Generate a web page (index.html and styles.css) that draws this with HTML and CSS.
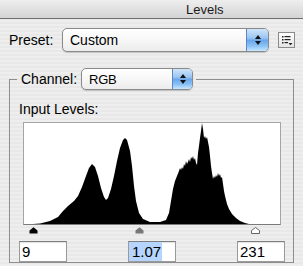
FILE: index.html
```html
<!DOCTYPE html>
<html>
<head>
<meta charset="utf-8">
<link rel="stylesheet" href="styles.css">
</head>
<body>
<div class="titlebar">Levels</div>
<div class="preset-row">
  <span class="label">Preset:</span>
  <div class="popup popup-preset">
    <span class="popup-text">Custom</span>
    <span class="popup-arrows"><i class="up"></i><i class="down"></i></span>
  </div>
  <div class="icon-btn">
    <svg width="17" height="16" viewBox="0 0 17 16">
      <defs><linearGradient id="ib" x1="0" y1="0" x2="0" y2="1"><stop offset="0" stop-color="#ffffff"/><stop offset="1" stop-color="#e4e4e4"/></linearGradient></defs>
      <rect x="0.5" y="0.5" width="16" height="15" fill="url(#ib)" stroke="#8a8a8a"/>
      <rect x="4" y="4" width="1.5" height="1.5" fill="#222"/>
      <rect x="4" y="7" width="1.5" height="1.5" fill="#222"/>
      <rect x="4" y="10" width="1.5" height="1.5" fill="#222"/>
      <rect x="6.5" y="4" width="6" height="1.2" fill="#222"/>
      <rect x="6.5" y="7" width="6" height="1.2" fill="#222"/>
      <rect x="6.5" y="10" width="3.5" height="1.2" fill="#222"/>
      <polygon points="10.5,11 14.5,11 12.5,13.2" fill="#222"/>
    </svg>
  </div>
</div>
<fieldset class="group">
  <legend class="legend">
    <div class="legend-inner">
      <span class="ch-label">Channel:</span>
      <div class="popup popup-channel">
        <span class="popup-text">RGB</span>
        <span class="popup-arrows"><i class="up"></i><i class="down"></i></span>
      </div>
    </div>
  </legend>
  <div class="input-label">Input Levels:</div>
  <div class="histogram">
    <svg width="256" height="101" viewBox="24 122 256 101" preserveAspectRatio="none">
      <path fill="#000" d="M33,223 L40,222.5 L50,220 L58,216 L63,210 L68,205 L74,200 L78,195 L82,186 L86,175 L89,167 L92,163 L95,166 L98,175 L101,187 L104,196 L106,199 L108,197 L111,188 L114,175 L117,160 L120,147 L123,139 L125,137 L127,139 L130,150 L132,165 L134,185 L136,200 L139,212 L143,218 L150,221 L160,221 L166,219 L169,212 L171,200 L173,188 L175,180 L177,175 L179,170 L180,167 L181,169 L182,166 L183,168 L184,163 L185,165 L186,160 L187,163 L188,161 L189,158 L190,161 L191,156 L192,158 L193,155 L194,159 L195,157 L196,162 L197,164 L198,152 L199,145 L200,137 L201,130 L202,122 L203,128 L204,137 L205,135 L206,138 L207,136 L208,141 L209,146 L210,155 L211,165 L212,172 L213,178 L214,175 L215,177 L216,174 L217,176 L218,172 L219,175 L220,173 L221,177 L222,176 L223,183 L224,190 L225,195 L227,203 L229,208 L232,213 L236,217 L240,220 L245,222 L249,223 Z"/>
    </svg>
  </div>
  <div class="slider-track">
    <svg class="marker" style="left:5px" width="9" height="7" viewBox="0 0 9 7"><polygon points="0.5,6.5 0.5,3.5 4.5,0.3 8.5,3.5 8.5,6.5" fill="#000"/></svg>
    <svg class="marker" style="left:111px" width="9" height="7" viewBox="0 0 9 7"><polygon points="0.5,6.5 0.5,3.5 4.5,0.3 8.5,3.5 8.5,6.5" fill="#777"/></svg>
    <svg class="marker" style="left:227px" width="9" height="7" viewBox="0 0 9 7"><polygon points="0.5,6.5 0.5,3.5 4.5,0.5 8.5,3.5 8.5,6.5" fill="#fff" stroke="#555" stroke-width="0.9"/></svg>
  </div>
  <div class="values">
    <div class="field">9</div>
    <div class="field field-selected"><span class="sel">1.07</span></div>
    <div class="field">231</div>
  </div>
</fieldset>
</body>
</html>
```
FILE: styles.css
```css
html, body {
  margin: 0;
  padding: 0;
}
body {
  width: 303px;
  height: 266px;
  overflow: hidden;
  background: repeating-linear-gradient(to bottom, #eeeeee 0, #eeeeee 2px, #e8e8e8 2px, #e8e8e8 4px);
  font-family: "Liberation Sans", Arial, sans-serif;
  font-size: 14px;
  color: #000;
}
.titlebar {
  height: 18px;
  background: linear-gradient(to bottom, #eeeeee, #d3d3d3);
  border-bottom: 1px solid #707070;
  font-size: 13px;
  line-height: 19px;
  padding-left: 186px;
  color: #1a1a1a;
}
.preset-row {
  display: flex;
  align-items: center;
  margin-top: 9px;
  padding-left: 9px;
  height: 24px;
}
.label {
  width: 53px;
}
.popup {
  display: flex;
  box-sizing: border-box;
  border: 1px solid #8a8a8a;
  border-radius: 5px;
  background: linear-gradient(to bottom, #ffffff, #f7f7f7 50%, #ececec);
  box-shadow: 0 1px 1px rgba(0, 0, 0, 0.18);
  overflow: hidden;
}
.popup-preset {
  width: 207px;
  height: 24px;
}
.popup-channel {
  width: 112px;
  height: 22px;
}
.popup-text {
  flex: 1;
  padding-left: 7px;
  display: flex;
  align-items: center;
}
.popup-channel .popup-text {
  font-size: 13px;
  letter-spacing: -0.3px;
}
.popup-arrows {
  width: 21px;
  border-left: 1px solid #5a86c2;
  background: linear-gradient(to bottom, #cfe4fa 0%, #9cc6f2 40%, #6aa6ea 52%, #8cc3f6 78%, #c9e7ff 100%);
  display: flex;
  flex-direction: column;
  align-items: center;
  justify-content: center;
  gap: 2px;
}
.popup-channel .popup-arrows {
  width: 19px;
}
.up {
  width: 0;
  height: 0;
  border-left: 3px solid transparent;
  border-right: 3px solid transparent;
  border-bottom: 4px solid #111;
}
.down {
  width: 0;
  height: 0;
  border-left: 3px solid transparent;
  border-right: 3px solid transparent;
  border-top: 4px solid #111;
}
.icon-btn {
  margin-left: 9px;
  width: 17px;
  height: 16px;
  display: flex;
}
.group {
  margin: 16px 9px 0 9px;
  padding: 0;
  border: 1px solid #8e8e8e;
  min-width: 0;
}
.legend {
  margin-left: 7px;
  padding: 0 3px 0 4px;
}
.legend-inner {
  display: flex;
  align-items: center;
}
.ch-label {
  margin-right: 4px;
}
.input-label {
  margin-top: 11px;
  padding-left: 9px;
  line-height: 16px;
}
.histogram {
  margin: 5px 0 0 13px;
  width: 256px;
  height: 101px;
  background: #fff;
  border: 1px solid #a6a6a6;
  border-bottom-color: #7a7a7a;
  display: flex;
}
.slider-track {
  position: relative;
  margin-left: 14px;
  width: 256px;
  height: 16px;
}
.marker {
  position: absolute;
  top: 2px;
}
.values {
  display: flex;
  justify-content: space-between;
  padding: 0 8px 0 9px;
}
.field {
  box-sizing: border-box;
  width: 48px;
  height: 21px;
  border: 1px solid #9a9a9a;
  border-top-color: #7e7e7e;
  background: #fff;
  box-shadow: inset 0 1px 1px rgba(0, 0, 0, 0.12);
  font-size: 15px;
  line-height: 19px;
  padding-left: 2px;
}
.field-selected {
  padding-left: 0;
}
.sel {
  display: inline-block;
  background: #b5d5fe;
  padding: 0 1px 0 3px;
  line-height: 19px;
}
```
